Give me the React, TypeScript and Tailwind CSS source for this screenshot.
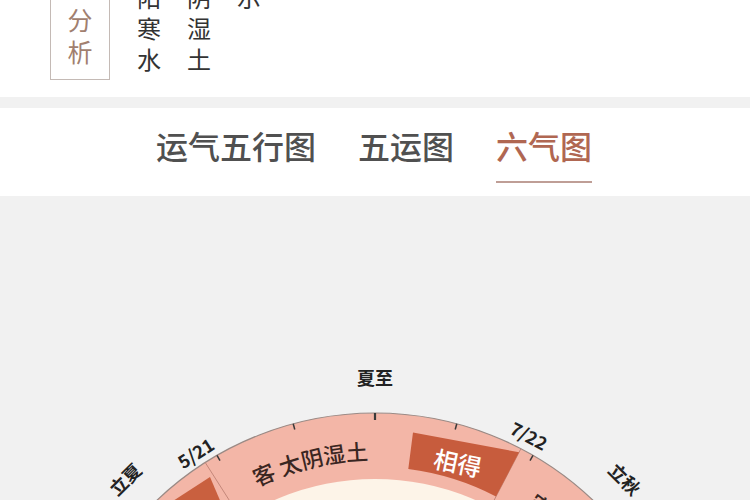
import React from "react";

const CX = 375;
const CY = 533;
const rad = (d: number) => (d * Math.PI) / 180;
const P = (r: number, d: number): [number, number] => [CX + r * Math.sin(rad(d)), CY - r * Math.cos(rad(d))];
const pt = (r: number, d: number) => P(r, d).map((v) => v.toFixed(2)).join(",");

function Wheel() {
  const ticks = [-30, -15, 0, 15, 30];
  const dividers = [-92.5, -32.5, 27.5, 87.5];
  const labelArc = `M ${pt(269, -90)} A 269 269 0 0 1 ${pt(269, 90)}`;
  const boxPath = `M ${pt(299, 7.3)} L ${pt(312, 27.5)} L ${pt(262, 27.5)} A 262 262 0 0 0 ${pt(262, 7.3)} Z`;
  const solar = [
    { t: "夏至", a: 0, r: 352 },
    { t: "5/21", a: -33, r: 330 },
    { t: "7/22", a: 27.7, r: 332 },
    { t: "立夏", a: -45, r: 354 },
    { t: "立秋", a: 45, r: 354 },
  ];
  return (
    <svg width="750" height="304" viewBox="0 0 750 304" className="block">
      <defs>
        <path id="labelArc" d={labelArc} />
      </defs>
      <circle cx={CX} cy={CY} r={316} fill="#f3b6a7" stroke="#9a8a85" strokeWidth="1.2" />
      <circle cx={CX} cy={CY} r={250} fill="#fdf4e8" />
      {dividers.map((a) => {
        const [x1, y1] = P(250, a);
        const [x2, y2] = P(316, a);
        return <line key={a} x1={x1} y1={y1} x2={x2} y2={y2} stroke="#c4877a" strokeWidth="1" />;
      })}
      {ticks.map((a) => {
        const [x1, y1] = P(316, a);
        const [x2, y2] = P(a === 0 ? 309 : 310, a);
        return (
          <line key={a} x1={x1} y1={y1} x2={x2} y2={y2} stroke="#3a3a3a" strokeWidth={a === 0 ? 2.2 : 1.5} />
        );
      })}
      <path d={boxPath} fill="#c75c3d" />
      <polygon points="210,281 225,316 156,316" fill="#c9603f" />
      <text
        x={458}
        y={266}
        transform="rotate(12 458 266)"
        textAnchor="middle"
        dominantBaseline="central"
        fontSize="24"
        fill="#ffffff"
        fontWeight="500"
      >
        相得
      </text>
      <text fontSize="22" fill="#3a2622" fontWeight="500">
        <textPath href="#labelArc" startOffset="42.4%" textAnchor="middle">
          客 太阴湿土
        </textPath>
      </text>
      <text fontSize="22" fill="#3a2622" fontWeight="500">
        <textPath href="#labelArc" startOffset="75.8%" textAnchor="middle">
          客 少阳相火
        </textPath>
      </text>
      {solar.map((s) => (
        <text
          key={s.t}
          x={CX}
          y={CY - s.r}
          transform={`rotate(${s.a} ${CX} ${CY})`}
          textAnchor="middle"
          dominantBaseline="central"
          fontSize="18"
          fontWeight="600"
          fill="#222222"
        >
          {s.t}
        </text>
      ))}
    </svg>
  );
}

export default function App() {
  const cols = [
    ["阳", "寒", "水"],
    ["阴", "湿", "土"],
    ["示", "", ""],
  ];
  return (
    <div className="w-[750px] h-[500px] overflow-hidden bg-[#f1f1f1] font-['Noto_Sans_CJK_SC',sans-serif]">
      <div className="h-[97px] bg-white overflow-hidden">
        <div className="flex items-start -mt-[45px]">
          <div className="ml-[50px] w-[60px] h-[125px] border-[1.5px] border-[#c4bab5] flex flex-col items-center justify-end pb-[12px] text-[25px] leading-[32px] text-[#a17f6f]">
            <span className="block">分</span>
            <span className="block">析</span>
          </div>
          <div className="ml-[27px] mt-[26px] flex gap-[26px] text-[24px] leading-[31px] text-[#333333]">
            {cols.map((c, i) => (
              <div key={i} className="flex flex-col w-[24px]">
                {c.map((ch, j) => (
                  <span key={j} className="block h-[31px] overflow-hidden">
                    {ch}
                  </span>
                ))}
              </div>
            ))}
          </div>
        </div>
      </div>
      <div className="h-[11px] bg-[#f1f1f1]" />
      <div className="h-[88px] bg-white flex pl-[156px] gap-[42px]">
        <div className="pt-[17px] text-[32px] leading-[40px] font-medium text-[#505050]">运气五行图</div>
        <div className="pt-[17px] text-[32px] leading-[40px] font-medium text-[#505050]">五运图</div>
        <div className="pt-[17px] flex flex-col">
          <span className="text-[32px] leading-[40px] font-medium text-[#b06752]">六气图</span>
          <span className="mt-[16px] h-[2px] bg-[#bf9e96]" />
        </div>
      </div>
      <Wheel />
    </div>
  );
}
